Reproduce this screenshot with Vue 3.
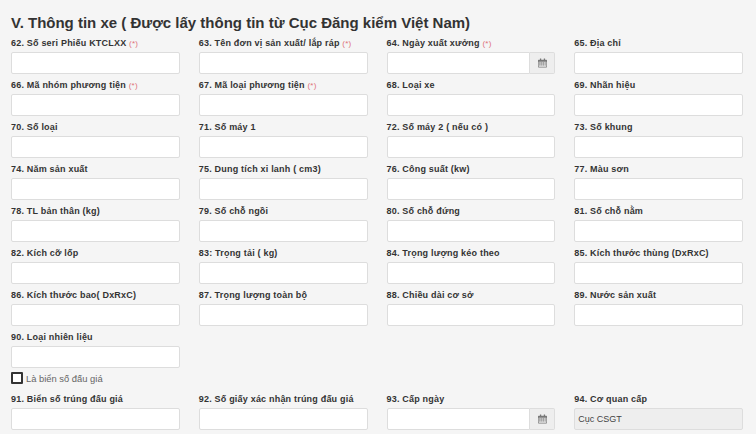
<template>
  <div class="page">
    <h3 class="title">V. Thông tin xe ( Được lấy thông tin từ Cục Đăng kiểm Việt Nam)</h3>

    <div class="grid">
      <div v-for="f in fields" :key="f.label" class="field">
        <label>{{ f.label }} <span v-if="f.required" class="req">(*)</span></label>
        <div v-if="f.date" class="date-group">
          <input type="text" />
          <span class="addon">
            <svg viewBox="0 0 14 14" width="9" height="10">
              <path fill="#777" d="M3 0h2v2h4V0h2v2h2a1 1 0 0 1 1 1v10a1 1 0 0 1-1 1H1a1 1 0 0 1-1-1V3a1 1 0 0 1 1-1h2zM1 5v8h12V5z" />
              <path fill="#777" d="M2 6h2v2H2zM5 6h2v2H5zM8 6h2v2H8zM11 6h1v2h-1zM2 9h2v2H2zM5 9h2v2H5zM8 9h2v2H8zM11 9h1v2h-1z" />
            </svg>
          </span>
        </div>
        <input v-else type="text" />
      </div>
    </div>

    <div class="check-row">
      <span class="check"></span>
      <span>Là biển số đấu giá</span>
    </div>

    <div class="grid">
      <div v-for="f in fieldsDauGia" :key="f.label" class="field">
        <label>{{ f.label }}</label>
        <div v-if="f.date" class="date-group">
          <input type="text" />
          <span class="addon">
            <svg viewBox="0 0 14 14" width="9" height="10">
              <path fill="#777" d="M3 0h2v2h4V0h2v2h2a1 1 0 0 1 1 1v10a1 1 0 0 1-1 1H1a1 1 0 0 1-1-1V3a1 1 0 0 1 1-1h2zM1 5v8h12V5z" />
              <path fill="#777" d="M2 6h2v2H2zM5 6h2v2H5zM8 6h2v2H8zM11 6h1v2h-1zM2 9h2v2H2zM5 9h2v2H5zM8 9h2v2H8zM11 9h1v2h-1z" />
            </svg>
          </span>
        </div>
        <input v-else-if="f.value" type="text" class="readonly" :value="f.value" readonly />
        <input v-else type="text" />
      </div>
    </div>
  </div>
</template>

<script setup>
const fields = [
  { label: '62. Số seri Phiếu KTCLXX', required: true },
  { label: '63. Tên đơn vị sản xuất/ lắp ráp', required: true },
  { label: '64. Ngày xuất xưởng', required: true, date: true },
  { label: '65. Địa chỉ' },
  { label: '66. Mã nhóm phương tiện', required: true },
  { label: '67. Mã loại phương tiện', required: true },
  { label: '68. Loại xe' },
  { label: '69. Nhãn hiệu' },
  { label: '70. Số loại' },
  { label: '71. Số máy 1' },
  { label: '72. Số máy 2 ( nếu có )' },
  { label: '73. Số khung' },
  { label: '74. Năm sản xuất' },
  { label: '75. Dung tích xi lanh ( cm3)' },
  { label: '76. Công suất (kw)' },
  { label: '77. Màu sơn' },
  { label: '78. TL bản thân (kg)' },
  { label: '79. Số chỗ ngồi' },
  { label: '80. Số chỗ đứng' },
  { label: '81. Số chỗ nằm' },
  { label: '82. Kích cỡ lốp' },
  { label: '83: Trọng tải ( kg)' },
  { label: '84. Trọng lượng kéo theo' },
  { label: '85. Kích thước thùng (DxRxC)' },
  { label: '86. Kích thước bao( DxRxC)' },
  { label: '87. Trọng lượng toàn bộ' },
  { label: '88. Chiều dài cơ sở' },
  { label: '89. Nước sản xuất' },
  { label: '90. Loại nhiên liệu' }
]

const fieldsDauGia = [
  { label: '91. Biển số trúng đấu giá' },
  { label: '92. Số giấy xác nhận trúng đấu giá' },
  { label: '93. Cấp ngày', date: true },
  { label: '94. Cơ quan cấp', value: 'Cục CSGT' }
]
</script>

<style>
html, body { margin: 0; background: #f5f5f5; overflow: hidden; }
</style>

<style scoped>
.page {
  height: 434px;
  padding: 14px 13px 0 11px;
  box-sizing: border-box;
  background: #f5f5f5;
  font-family: "Liberation Sans", Arial, sans-serif;
  color: #333;
  overflow: hidden;
}
.title {
  margin: 0;
  height: 22px;
  font-size: 15px;
  line-height: 17px;
  font-weight: 700;
  color: #333;
}
.grid {
  display: grid;
  grid-template-columns: repeat(4, minmax(0, 1fr));
  column-gap: 19px;
}
.field { height: 42px; }
.field label {
  display: block;
  height: 16px;
  font-size: 9px;
  line-height: 14px;
  font-weight: 700;
  letter-spacing: .2px;
  color: #333;
  white-space: nowrap;
}
.req { font-weight: 400; font-size: 8px; color: #e0727a; }
input {
  display: block;
  width: 100%;
  height: 22px;
  box-sizing: border-box;
  padding: 0 3px;
  border: 1px solid #ddd;
  border-radius: 2px;
  background: #fff;
  font-family: inherit;
  font-size: 9px;
  color: #444;
  outline: none;
}
input.readonly { background: #eee; }
.date-group { display: flex; height: 22px; }
.date-group input {
  flex: 1;
  min-width: 0;
  border-radius: 2px 0 0 2px;
}
.addon {
  width: 24px;
  display: flex;
  align-items: center;
  justify-content: center;
  border: 1px solid #ddd;
  border-left: none;
  border-radius: 0 2px 2px 0;
  background: #eee;
}
.check-row {
  display: flex;
  align-items: center;
  gap: 3px;
  height: 18px;
  margin: -3px 0 5px;
  font-size: 9.4px;
  color: #666;
}
.check {
  width: 12px;
  height: 12px;
  box-sizing: border-box;
  border: 2px solid #333;
  border-radius: 1px;
  background: #fff;
}
</style>
